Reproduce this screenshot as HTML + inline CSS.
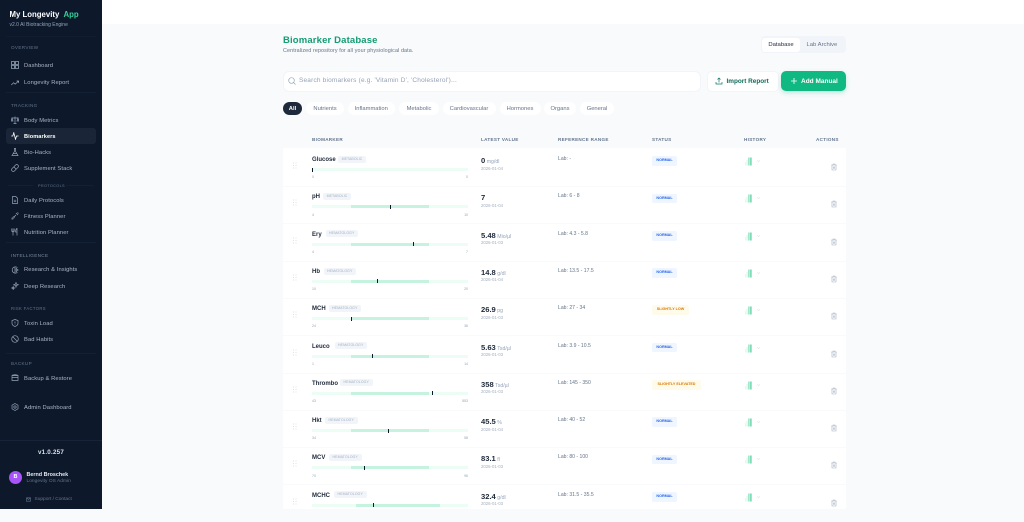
<!DOCTYPE html>
<html lang="en"><head><meta charset="utf-8"><title>Biomarker Database</title>
<style>
html,body{margin:0;padding:0}
body{width:1024px;height:509px;overflow:hidden;background:#f8fafc;position:relative;font-family:"Liberation Sans",sans-serif;color:#1e293b}
.t,.a{position:absolute;white-space:nowrap}
.t{line-height:8px;height:8px;margin-top:1px}
#side{position:absolute;left:0;top:0;width:102px;height:509px;background:#0d182b}
#top{position:absolute;left:102px;top:0;width:922px;height:24px;background:#fff}
.sec{left:11px;font-size:4.6px;color:#64748b;letter-spacing:.35px}
.nav{left:24px;font-size:5.8px;color:#aab5c5;letter-spacing:.08px}
.ic{position:absolute;left:10.5px;width:8px;height:8px;fill:none;stroke:#94a3b8;stroke-width:1}
.ln{position:absolute;left:6px;width:90px;height:1px;background:#131f33}
.pill{position:absolute;top:102px;height:13px;line-height:14px;background:#fff;border-radius:7px;font-size:5.8px;color:#64748b;text-align:center}
.hd{top:134.5px;font-size:4.6px;color:#64748b;letter-spacing:.3px;font-weight:bold}
#card{position:absolute;left:283px;top:148px;width:563px;height:361px;background:#fff}
.r{position:absolute;left:0;width:1024px;height:37.3px}
.dv{position:absolute;left:283px;top:37px;width:563px;height:1px;background:#f8fafc}
.n{left:312px;top:6px;font-size:6px;font-weight:bold;color:#1e293b}
.g{position:absolute;top:6.7px;height:7px;line-height:7px;background:#f1f5f9;border-radius:2px;font-size:3.5px;color:#a3afc0;text-align:center;letter-spacing:.1px}
.b{position:absolute;left:312px;top:19px;width:156px;height:3px;background:#ecfdf5}
.bd{position:absolute;top:19px;height:3px;background:#c6f3df;left:351px;width:78px}
.m{position:absolute;top:18.5px;width:1px;height:4px;background:#0f172a}
.s{top:23.3px;font-size:3.5px;color:#94a3b8}
.s2{right:556px;top:23.3px;font-size:3.5px;color:#94a3b8}
.v{left:481px;top:7px;font-size:7.6px;font-weight:bold;color:#1e293b}
.v span{font-size:5.2px;font-weight:normal;color:#94a3b8;margin-left:1.5px}
.d{left:481px;top:14.5px;font-size:4.3px;color:#a3afc0}
.l{left:558px;top:5px;font-size:5.1px;color:#64748b}
.st{position:absolute;left:652px;top:7.3px;height:9.7px;line-height:9.7px;border-radius:2px;font-size:3.7px;font-weight:bold;text-align:center}
.ok{width:25px;background:#eff6ff;color:#2563eb}
.lo{width:37px;background:#fffbeb;color:#d97706}
.hi{width:49px;background:#fffbeb;color:#d97706}
.u{position:absolute}
</style></head><body>
<svg width="0" height="0" style="position:absolute"><defs>
<symbol id="tr" viewBox="0 0 8 8"><path d="M1.2 2h5.6M3 2V1h2v1M2 2v5h4V2M3.3 3.5v2.2M4.7 3.5v2.2" fill="none" stroke="#a3afc0" stroke-width=".6"/></symbol>
<symbol id="dr" viewBox="0 0 6 8"><g fill="#dbe2ea"><rect x="1" y=".5" width="1" height="1"/><rect x="3.5" y=".5" width="1" height="1"/><rect x="1" y="3" width="1" height="1"/><rect x="3.5" y="3" width="1" height="1"/><rect x="1" y="5.5" width="1" height="1"/><rect x="3.5" y="5.5" width="1" height="1"/></g></symbol>
<symbol id="hs" viewBox="0 0 18 9"><rect x="1" y="5" width="1" height="3.5" fill="#e6f7f0"/><rect x="2.6" y="3" width="1" height="5.5" fill="#d5f3e6"/><rect x="4.2" y=".5" width="1.4" height="8" fill="#8ee3c0"/><rect x="6.2" y=".5" width="1.4" height="8" fill="#5fd3a8"/><path d="M13 3.2l1.5 1.5 1.5-1.5" fill="none" stroke="#dbe2ea" stroke-width=".6"/></symbol>
</defs></svg>

<div id="side">
<div class="t" style="left:9.5px;top:10px;font-size:7.8px;font-weight:bold;color:#fff">My Longevity <span style="color:#34d399;margin-left:2px">App</span></div>
<div class="t" style="left:9.5px;top:19.5px;font-size:5px;color:#94a3b8">v2.0 AI Biotracking Engine</div>
<div class="ln" style="top:36px;background:#111c2f"></div>
<div class="t sec" style="top:43px">OVERVIEW</div>
<svg class="ic" style="top:61px" viewBox="0 0 8 8"><path d="M.5.5h3v3h-3zM4.500.5h3v3h-3zM.5 4.500h3v3h-3zM4.500 4.500h3v3h-3z" stroke-width=".8"/></svg>
<div class="t nav" style="top:61px">Dashboard</div>
<svg class="ic" style="top:79px" viewBox="0 0 8 8"><path d="M.3 6l2.300-2.300 1.600 1.400L7.600 2M5.600 2h2v2" stroke-width=".7"/></svg>
<div class="t nav" style="top:78px">Longevity Report</div>
<div class="ln" style="top:92px"></div>
<div class="t sec" style="top:100.500px">TRACKING</div>
<svg class="ic" style="top:116px" viewBox="0 0 8 8"><path d="M4 .5v7M2.500 7.500h3M1 2h6M1 2L0 5h2zM7 2L6 5h2z" stroke-width=".7"/></svg>
<div class="t nav" style="top:115.500px">Body Metrics</div>
<div class="a" style="left:6px;top:128px;width:90px;height:16px;background:#1a2638;border-radius:3px"></div>
<svg class="ic" style="top:132px;stroke:#fff" viewBox="0 0 8 8"><path d="M.3 4h1.500l1-3.300 1.700 6.600 1-3.300h2"  stroke-width=".8"/></svg>
<div class="t nav" style="top:131.500px;color:#fff;font-weight:bold;font-size:5.600px">Biomarkers</div>
<svg class="ic" style="top:148px" viewBox="0 0 8 8"><path d="M3 .5h2M3.400.5v3L1 7.500h6L4.600 3.500v-3M2 5.500h4" stroke-width=".7"/></svg>
<div class="t nav" style="top:147.500px">Bio-Hacks</div>
<svg class="ic" style="top:164px" viewBox="0 0 8 8"><path d="M1 4.600L4.600 1a1.700 1.700 0 0 1 2.400 2.400L3.400 7A1.700 1.700 0 0 1 1 4.600zM2.800 2.800l2.400 2.400" stroke-width=".7"/></svg>
<div class="t nav" style="top:163.500px">Supplement Stack</div>
<div class="a" style="left:8px;top:185px;width:25px;height:1px;background:#131f33"></div>
<div class="a" style="left:66px;top:185px;width:28px;height:1px;background:#131f33"></div>
<div class="t" style="left:38px;top:180.500px;font-size:3.800px;color:#64748b;letter-spacing:.35px">PROTOCOLS</div>
<svg class="ic" style="top:196px" viewBox="0 0 8 8"><path d="M1.500.5h3.300l1.700 1.700v5.300h-5zM2.800 4.200h2.400M2.800 5.700h2.400" stroke-width=".7"/></svg>
<div class="t nav" style="top:195.500px">Daily Protocols</div>
<svg class="ic" style="top:212px" viewBox="0 0 8 8"><path d="M1 5.500l1.500 1.500M.5 6.500l1 1M2 4.500L3.500 6M3 5l2-2M5 1l2 2M6.500.5l1 1" stroke-width=".8"/></svg>
<div class="t nav" style="top:211.500px">Fitness Planner</div>
<svg class="ic" style="top:228px" viewBox="0 0 8 8"><path d="M.8.5v2.400c0 .6.5 1 1.200 1s1.200-.4 1.200-1V.5M2 .5v7M6 7.500v-7C5 1 4.600 2.400 4.600 4H6" stroke-width=".7"/></svg>
<div class="t nav" style="top:227.500px">Nutrition Planner</div>
<div class="ln" style="top:242px"></div>
<div class="t sec" style="top:250.500px;color:#7c8a9e">INTELLIGENCE</div>
<svg class="ic" style="top:266px" viewBox="0 0 8 8"><path d="M6.500 1.600A3.200 3.200 0 1 0 6.500 6.400M4 .8v6.400M4.500 4H7.500M5 2l1.500 2L5 6" stroke-width=".7"/></svg>
<div class="t nav" style="top:265px">Research &amp; Insights</div>
<svg class="ic" style="top:282px" viewBox="0 0 8 8"><path d="M5 .5l.6 1.700 1.700.6-1.700.6L5 5.100l-.6-1.700-1.700-.6 1.700-.6zM2.200 4.500l.4 1.100 1.100.4-1.100.4-.4 1.100-.4-1.100L.7 6l1.100-.4z" stroke-width=".7"/></svg>
<div class="t nav" style="top:281.500px">Deep Research</div>
<div class="t sec" style="top:303.500px;font-size:4.200px">RISK FACTORS</div>
<svg class="ic" style="top:319px" viewBox="0 0 8 8"><path d="M4 .5l3 1v2.800C7 6 5.500 7 4 7.500 2.500 7 1 6 1 4.300V1.500zM4 2.500v2M4 5.500v.4" stroke-width=".7"/></svg>
<div class="t nav" style="top:318.500px">Toxin Load</div>
<svg class="ic" style="top:335px" viewBox="0 0 8 8"><circle cx="4" cy="4" r="3.300" stroke-width=".7"/><path d="M1.700 1.700l4.600 4.600" stroke-width=".7"/></svg>
<div class="t nav" style="top:334.500px">Bad Habits</div>
<div class="ln" style="top:353px"></div>
<div class="t sec" style="top:358.500px">BACKUP</div>
<svg class="ic" style="top:374px" viewBox="0 0 8 8"><path d="M1 1.500h6v5H1zM1 3.500h6M1 1.500c1-1 5-1 6 0" stroke-width=".7"/></svg>
<div class="t nav" style="top:373.500px">Backup &amp; Restore</div>
<svg class="ic" style="top:403px" viewBox="0 0 8 8"><circle cx="4" cy="4" r="1.200" stroke-width=".7"/><path d="M4 .5l3 1.700v3.600l-3 1.700-3-1.700V2.200z" stroke-width=".7"/></svg>
<div class="t nav" style="top:402.500px">Admin Dashboard</div>
<div class="a" style="left:0;top:440px;width:102px;height:1px;background:#172338"></div>
<div class="t" style="left:0;width:102px;text-align:center;top:447.500px;font-size:6.200px;font-weight:bold;color:#dbe2ea;letter-spacing:.25px">v1.0.257</div>
<div class="a" style="left:9px;top:471px;width:13px;height:13px;border-radius:50%;background:#a855f7;color:#fff;font-size:5.500px;font-weight:bold;line-height:13px;text-align:center">B</div>
<div class="t" style="left:26.500px;top:469.500px;font-size:5.400px;font-weight:bold;color:#e6ebf2">Bernd Broschek</div>
<div class="t" style="left:26.500px;top:476.500px;font-size:4.800px;color:#64748b;letter-spacing:.05px">Longevity OS Admin</div>
<svg class="a" style="left:26px;top:496.500px;fill:none;stroke:#64748b;stroke-width:.6" width="5" height="5" viewBox="0 0 5 5"><path d="M.5.8h4v3.400h-4zM.5.8l2 1.700 2-1.700"/></svg>
<div class="t" style="left:34.500px;top:494.500px;font-size:4.800px;color:#64748b">Support / Contact</div>
</div>

<div id="top"></div>

<div class="t" style="left:283px;top:36px;font-size:9.500px;font-weight:bold;color:#149c72;letter-spacing:.15px">Biomarker Database</div>
<div class="t" style="left:283px;top:45.500px;font-size:5.400px;color:#64748b;letter-spacing:.1px">Centralized repository for all your physiological data.</div>
<div class="a" style="left:761px;top:36px;width:85px;height:17px;background:#f1f5f9;border-radius:4px"></div>
<div class="a" style="left:762px;top:37.500px;width:38px;height:14px;line-height:14px;background:#fff;border-radius:3px;font-size:5.900px;color:#1e293b;text-align:center">Database</div>
<div class="t" style="left:806.500px;top:39.500px;font-size:5.900px;color:#64748b">Lab Archive</div>

<div class="a" style="left:283px;top:71px;width:416px;height:19px;background:#fff;border:1px solid #f1f5f9;border-radius:6px"></div>
<svg class="a" style="left:287.500px;top:77px;fill:none;stroke:#94a3b8;stroke-width:.7" width="8" height="8" viewBox="0 0 8 8"><circle cx="3.500" cy="3.500" r="2.800"/><path d="M5.500 5.500l2 2"/></svg>
<div class="t" style="left:299px;top:76px;font-size:6.500px;color:#94a3b8;letter-spacing:.18px">Search biomarkers (e.g. 'Vitamin D', 'Cholesterol')...</div>
<div class="a" style="left:707px;top:71px;width:70px;height:19px;background:#fff;border:1px solid #f1f5f9;border-radius:5px"></div>
<svg class="a" style="left:715px;top:77px;fill:none;stroke:#0f766e;stroke-width:.7" width="8" height="8" viewBox="0 0 8 8"><path d="M1 5v2h6V5M4 5.500V1M2.500 2.500L4 1l1.500 1.500"/></svg>
<div class="t" style="left:726.500px;top:76.500px;font-size:6.400px;font-weight:bold;color:#0f6b57">Import Report</div>
<div class="a" style="left:781px;top:71px;width:65px;height:20px;background:#10b981;border-radius:5px;box-shadow:0 2px 5px rgba(16,185,129,.25)"></div>
<svg class="a" style="left:790px;top:77px;fill:none;stroke:#fff;stroke-width:.8" width="8" height="8" viewBox="0 0 8 8"><path d="M4 1v6M1 4h6"/></svg>
<div class="t" style="left:801px;top:76.500px;font-size:6.500px;font-weight:bold;color:#fff">Add Manual</div>

<div class="pill" style="left:283px;width:19px;background:#1e293b;color:#fff;font-weight:bold">All</div>
<div class="pill" style="left:306px;width:38px">Nutrients</div>
<div class="pill" style="left:347.500px;width:47.500px">Inflammation</div>
<div class="pill" style="left:399px;width:40px">Metabolic</div>
<div class="pill" style="left:442.500px;width:53px">Cardiovascular</div>
<div class="pill" style="left:499.500px;width:41px">Hormones</div>
<div class="pill" style="left:544px;width:32px">Organs</div>
<div class="pill" style="left:580px;width:34px">General</div>

<div class="t hd" style="left:312px">BIOMARKER</div>
<div class="t hd" style="left:481px">LATEST VALUE</div>
<div class="t hd" style="left:558px">REFERENCE RANGE</div>
<div class="t hd" style="left:652px">STATUS</div>
<div class="t hd" style="left:744px">HISTORY</div>
<div class="t hd" style="left:816px">ACTIONS</div>

<div id="card"></div>

<div class="r" style="top:149px"><div class="dv"></div><svg class="u" style="left:291.500px;top:13px" width="6" height="8"><use href="#dr"/></svg><div class="t n">Glucose</div><div class="g" style="left:338px;width:28px">METABOLIC</div><div class="b"></div><div class="m" style="left:312px"></div><div class="t s" style="left:312px">0</div><div class="t s2">0</div><div class="t v">0<span>mg/dl</span></div><div class="t d">2026-01-04</div><div class="t l">Lab: -</div><div class="st ok">NORMAL</div><svg class="u" style="left:744px;top:8px" width="18" height="9"><use href="#hs"/></svg><svg class="u" style="left:829.500px;top:14px" width="8" height="8"><use href="#tr"/></svg></div>

<div class="r" style="top:186.300px"><div class="dv"></div><svg class="u" style="left:291.500px;top:13px" width="6" height="8"><use href="#dr"/></svg><div class="t n">pH</div><div class="g" style="left:323px;width:28px">METABOLIC</div><div class="b"></div><div class="bd"></div><div class="m" style="left:390px"></div><div class="t s" style="left:312px">4</div><div class="t s2">10</div><div class="t v">7</div><div class="t d">2026-01-04</div><div class="t l">Lab: 6 - 8</div><div class="st ok">NORMAL</div><svg class="u" style="left:744px;top:8px" width="18" height="9"><use href="#hs"/></svg><svg class="u" style="left:829.500px;top:14px" width="8" height="8"><use href="#tr"/></svg></div>

<div class="r" style="top:223.600px"><div class="dv"></div><svg class="u" style="left:291.500px;top:13px" width="6" height="8"><use href="#dr"/></svg><div class="t n">Ery</div><div class="g" style="left:326px;width:31.500px">HEMATOLOGY</div><div class="b"></div><div class="bd"></div><div class="m" style="left:412.500px"></div><div class="t s" style="left:312px">4</div><div class="t s2">7</div><div class="t v">5.48<span>Mio/µl</span></div><div class="t d">2026-01-03</div><div class="t l">Lab: 4.3 - 5.8</div><div class="st ok">NORMAL</div><svg class="u" style="left:744px;top:8px" width="18" height="9"><use href="#hs"/></svg><svg class="u" style="left:829.500px;top:14px" width="8" height="8"><use href="#tr"/></svg></div>

<div class="r" style="top:260.900px"><div class="dv"></div><svg class="u" style="left:291.500px;top:13px" width="6" height="8"><use href="#dr"/></svg><div class="t n">Hb</div><div class="g" style="left:324px;width:31.500px">HEMATOLOGY</div><div class="b"></div><div class="bd"></div><div class="m" style="left:376.500px"></div><div class="t s" style="left:312px">10</div><div class="t s2">20</div><div class="t v">14.8<span>g/dl</span></div><div class="t d">2026-01-04</div><div class="t l">Lab: 13.5 - 17.5</div><div class="st ok">NORMAL</div><svg class="u" style="left:744px;top:8px" width="18" height="9"><use href="#hs"/></svg><svg class="u" style="left:829.500px;top:14px" width="8" height="8"><use href="#tr"/></svg></div>

<div class="r" style="top:298.200px"><div class="dv"></div><svg class="u" style="left:291.500px;top:13px" width="6" height="8"><use href="#dr"/></svg><div class="t n">MCH</div><div class="g" style="left:329px;width:31.500px">HEMATOLOGY</div><div class="b"></div><div class="bd"></div><div class="m" style="left:350.500px"></div><div class="t s" style="left:312px">24</div><div class="t s2">36</div><div class="t v">26.9<span>pg</span></div><div class="t d">2026-01-03</div><div class="t l">Lab: 27 - 34</div><div class="st lo">SLIGHTLY LOW</div><svg class="u" style="left:744px;top:8px" width="18" height="9"><use href="#hs"/></svg><svg class="u" style="left:829.500px;top:14px" width="8" height="8"><use href="#tr"/></svg></div>

<div class="r" style="top:335.500px"><div class="dv"></div><svg class="u" style="left:291.500px;top:13px" width="6" height="8"><use href="#dr"/></svg><div class="t n">Leuco</div><div class="g" style="left:335px;width:31.500px">HEMATOLOGY</div><div class="b"></div><div class="bd"></div><div class="m" style="left:371.500px;width:1.500px"></div><div class="t s" style="left:312px">1</div><div class="t s2">14</div><div class="t v">5.63<span>Tsd/µl</span></div><div class="t d">2026-01-03</div><div class="t l">Lab: 3.9 - 10.5</div><div class="st ok">NORMAL</div><svg class="u" style="left:744px;top:8px" width="18" height="9"><use href="#hs"/></svg><svg class="u" style="left:829.500px;top:14px" width="8" height="8"><use href="#tr"/></svg></div>

<div class="r" style="top:372.800px"><div class="dv"></div><svg class="u" style="left:291.500px;top:13px" width="6" height="8"><use href="#dr"/></svg><div class="t n">Thrombo</div><div class="g" style="left:340px;width:32.500px">HEMATOLOGY</div><div class="b"></div><div class="bd"></div><div class="m" style="left:432px"></div><div class="t s" style="left:312px">43</div><div class="t s2">553</div><div class="t v">358<span>Tsd/µl</span></div><div class="t d">2026-01-03</div><div class="t l">Lab: 145 - 350</div><div class="st hi">SLIGHTLY ELEVATED</div><svg class="u" style="left:744px;top:8px" width="18" height="9"><use href="#hs"/></svg><svg class="u" style="left:829.500px;top:14px" width="8" height="8"><use href="#tr"/></svg></div>

<div class="r" style="top:410.100px"><div class="dv"></div><svg class="u" style="left:291.500px;top:13px" width="6" height="8"><use href="#dr"/></svg><div class="t n">Hkt</div><div class="g" style="left:325px;width:32.500px">HEMATOLOGY</div><div class="b"></div><div class="bd"></div><div class="m" style="left:387.500px"></div><div class="t s" style="left:312px">34</div><div class="t s2">58</div><div class="t v">45.5<span>%</span></div><div class="t d">2026-01-04</div><div class="t l">Lab: 40 - 52</div><div class="st ok">NORMAL</div><svg class="u" style="left:744px;top:8px" width="18" height="9"><use href="#hs"/></svg><svg class="u" style="left:829.500px;top:14px" width="8" height="8"><use href="#tr"/></svg></div>

<div class="r" style="top:447.400px"><div class="dv"></div><svg class="u" style="left:291.500px;top:13px" width="6" height="8"><use href="#dr"/></svg><div class="t n">MCV</div><div class="g" style="left:329px;width:32.500px">HEMATOLOGY</div><div class="b"></div><div class="bd"></div><div class="m" style="left:363.500px"></div><div class="t s" style="left:312px">70</div><div class="t s2">96</div><div class="t v">83.1<span>fl</span></div><div class="t d">2026-01-03</div><div class="t l">Lab: 80 - 100</div><div class="st ok">NORMAL</div><svg class="u" style="left:744px;top:8px" width="18" height="9"><use href="#hs"/></svg><svg class="u" style="left:829.500px;top:14px" width="8" height="8"><use href="#tr"/></svg></div>

<div class="r" style="top:484.700px"><svg class="u" style="left:291.500px;top:13px" width="6" height="8"><use href="#dr"/></svg><div class="t n">MCHC</div><div class="g" style="left:334px;width:32.500px">HEMATOLOGY</div><div class="b"></div><div class="bd" style="left:356px;width:84px"></div><div class="m" style="left:372.500px;width:1.500px"></div><div class="t v">32.4<span>g/dl</span></div><div class="t d">2026-01-03</div><div class="t l">Lab: 31.5 - 35.5</div><div class="st ok">NORMAL</div><svg class="u" style="left:744px;top:8px" width="18" height="9"><use href="#hs"/></svg><svg class="u" style="left:829.500px;top:14px" width="8" height="8"><use href="#tr"/></svg></div>

</body></html>
